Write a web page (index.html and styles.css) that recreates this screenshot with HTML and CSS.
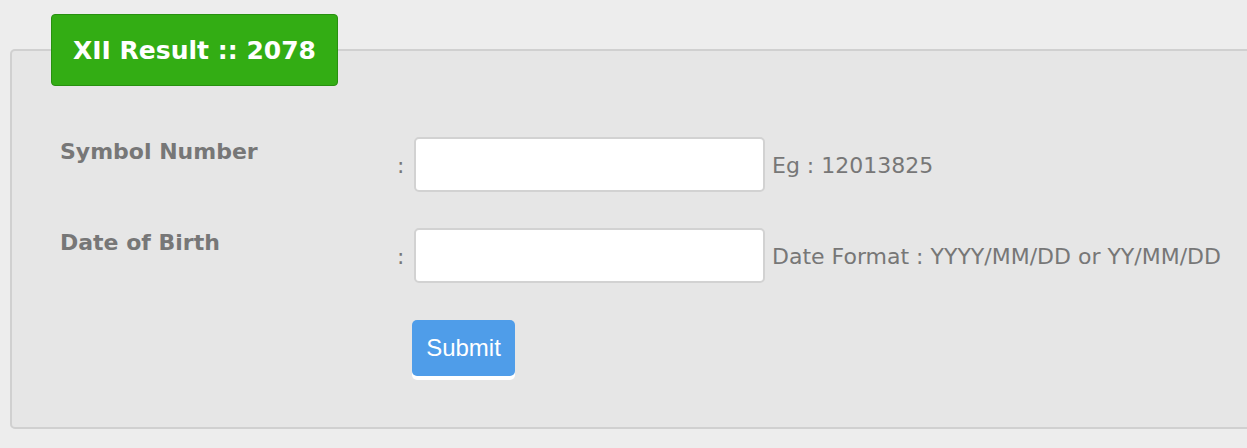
FILE: index.html
```html
<!DOCTYPE html>
<html>
<head>
<meta charset="utf-8">
<link rel="stylesheet" href="styles.css">
</head>
<body>
<form class="result-form">
  <fieldset class="panel">
    <legend class="panel-title"><span>XII Result :: 2078</span></legend>
    <div class="rows">
      <div class="row">
        <label class="label" for="symbol">Symbol Number</label>
        <span class="colon">:</span>
        <input class="field" id="symbol" type="text">
        <span class="hint">Eg : 12013825</span>
      </div>
      <div class="row">
        <label class="label" for="dob">Date of Birth</label>
        <span class="colon">:</span>
        <input class="field" id="dob" type="text">
        <span class="hint">Date Format : YYYY/MM/DD or YY/MM/DD</span>
      </div>
      <div class="row row-actions">
        <span class="label"></span>
        <span class="colon"></span>
        <div class="actions"><button class="submit" type="button">Submit</button></div>
      </div>
    </div>
  </fieldset>
</form>
</body>
</html>
```

FILE: styles.css
```css
html, body {
  margin: 0;
  padding: 0;
  background: #ededed;
  overflow: hidden;
}
body {
  font-family: "DejaVu Sans", Verdana, sans-serif;
  color: #777;
}
.result-form {
  padding: 14px 0 0 10px;
}
.panel {
  margin: 0;
  width: 1300px;
  box-sizing: border-box;
  border: 2px solid #d0d0d0;
  border-radius: 5px;
  background: #e6e6e6;
  padding: 0 0 47px 48px;
}
.panel-title {
  margin-left: -9px;
  padding: 0;
  box-sizing: border-box;
  width: 287px;
  height: 72px;
  display: flex;
  align-items: center;
  justify-content: center;
  background: #33ad14;
  border: 1px solid #289010;
  border-radius: 4px;
  color: #fff;
  font-weight: bold;
  font-size: 25px;
}
.rows {
  display: flex;
  flex-direction: column;
  gap: 36px;
  padding-top: 51px;
}
.row {
  display: grid;
  grid-template-columns: 337px 17px 351px auto;
  align-items: center;
  column-gap: 0;
}
.row-actions {
  margin-top: 1px;
}
.label {
  align-self: start;
  font-weight: bold;
  font-size: 22px;
  line-height: 26px;
  padding-top: 2px;
}
.colon {
  font-size: 22px;
  padding-top: 2px;
}
.field {
  box-sizing: border-box;
  width: 351px;
  height: 55px;
  margin: 0;
  border: 2px solid #d2d2d2;
  border-radius: 5px;
  background: #fff;
  outline: none;
}
.hint {
  padding-left: 7px;
  font-size: 22px;
  padding-top: 2px;
  white-space: nowrap;
}
.actions {
  margin-left: -2px;
}
.submit {
  width: 103px;
  height: 56px;
  border: none;
  border-radius: 5px;
  background: #4f9de9;
  color: #fff;
  font-family: "Liberation Sans", Arial, sans-serif;
  font-size: 24px;
  box-shadow: 0 4px 0 #fff;
  padding: 0;
  margin-bottom: 4px;
}
```
